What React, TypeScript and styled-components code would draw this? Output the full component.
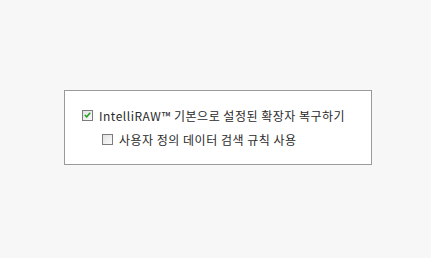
import React from "react";
import styled, { createGlobalStyle } from "styled-components";

const GlobalStyle = createGlobalStyle`
  html, body {
    margin: 0;
    padding: 0;
    background: #f7f7f7;
    font-family: "Noto Sans CJK KR", "Noto Sans", sans-serif;
  }
`;

const Page = styled.div`
  width: 431px;
  height: 258px;
  padding: 90px 0 0 64px;
  box-sizing: border-box;
`;

const Panel = styled.div`
  width: 308px;
  height: 75px;
  box-sizing: border-box;
  background: #ffffff;
  border: 1px solid #9a9a9a;
  padding: 17px 0 0 17px;
  display: flex;
  flex-direction: column;
  gap: 10px;
`;

const Row = styled.label<{ $indent?: number }>`
  display: flex;
  align-items: center;
  gap: 6px;
  height: 14px;
  padding-left: ${(p) => p.$indent ?? 0}px;
  font-size: 12px;
  letter-spacing: 0.5px;
  color: #2a2a2a;
  white-space: nowrap;
`;

const Box = styled.span<{ $checked?: boolean }>`
  width: 11px;
  height: 11px;
  flex: none;
  box-sizing: border-box;
  border: 1px solid #7c7c7c;
  background: linear-gradient(135deg, #e2e2e2 0%, #fafafa 100%);
  display: flex;
  align-items: center;
  justify-content: center;
`;

const Check = () => (
  <svg width="7" height="6" viewBox="0 0 7 6">
    <path d="M0.8 3 L2.7 4.8 L6.2 0.8" fill="none" stroke="#2aa02a" strokeWidth="1.6" />
  </svg>
);

export default function App() {
  return (
    <>
      <GlobalStyle />
      <Page>
        <Panel>
          <Row>
            <Box $checked>
              <Check />
            </Box>
            IntelliRAW™ 기본으로 설정된 확장자 복구하기
          </Row>
          <Row $indent={20}>
            <Box />
            사용자 정의 데이터 검색 규칙 사용
          </Row>
        </Panel>
      </Page>
    </>
  );
}
